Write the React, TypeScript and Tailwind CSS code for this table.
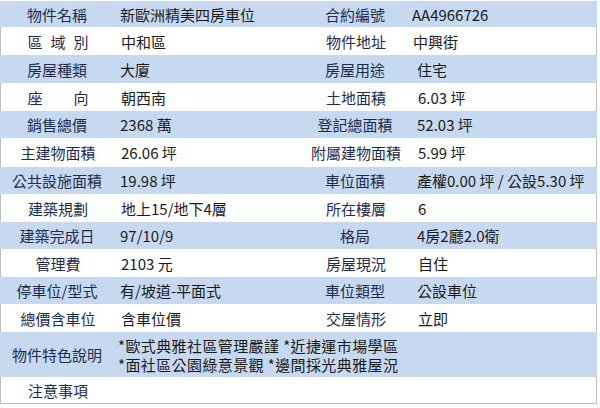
import React from 'react';

interface Row {
  label: string;
  value: string;
  label2?: string;
  value2?: string;
  h: string;
  spread?: boolean;
  tight?: boolean;
}

const rows: Row[] = [
  { label: '物件名稱', value: '新歐洲精美四房車位', label2: '合約編號', value2: 'AA4966726', h: 'h-[26px]', tight: true },
  { label: '區域別', value: '中和區', label2: '物件地址', value2: '中興街', h: 'h-[28px]', spread: true, tight: true },
  { label: '房屋種類', value: '大廈', label2: '房屋用途', value2: '住宅', h: 'h-[28px]' },
  { label: '座向', value: '朝西南', label2: '土地面積', value2: '6.03 坪', h: 'h-[28px]', spread: true },
  { label: '銷售總價', value: '2368 萬', label2: '登記總面積', value2: '52.03 坪', h: 'h-[27px]' },
  { label: '主建物面積', value: '26.06 坪', label2: '附屬建物面積', value2: '5.99 坪', h: 'h-[29px]' },
  { label: '公共設施面積', value: '19.98 坪', label2: '車位面積', value2: '產權0.00 坪 / 公設5.30 坪', h: 'h-[27px]' },
  { label: '建築規劃', value: '地上15/地下4層', label2: '所在樓層', value2: '6', h: 'h-[28px]' },
  { label: '建築完成日', value: '97/10/9', label2: '格局', value2: '4房2廳2.0衛', h: 'h-[27px]' },
  { label: '管理費', value: '2103 元', label2: '房屋現況', value2: '自住', h: 'h-[28px]' },
  { label: '停車位/型式', value: '有/坡道-平面式', label2: '車位類型', value2: '公設車位', h: 'h-[27px]' },
  { label: '總價含車位', value: '含車位價', label2: '交屋情形', value2: '立即', h: 'h-[28px]' },
];

const font = { fontFamily: '"Noto Sans CJK TC", "Noto Sans", sans-serif' };

const Label: React.FC<{ text: string; spread?: boolean; className: string }> = ({ text, spread, className }) => (
  <div className={`${className} shrink-0 flex items-center justify-center text-[#1d2c4c]`}>
    {spread ? (
      <span className="w-[61px] flex justify-between">
        {text.split('').map((c, i) => <span key={i}>{c}</span>)}
      </span>
    ) : (
      text
    )}
  </div>
);

export default function App() {
  return (
    <div className="w-[600px] h-[408px] bg-white pt-[1px] text-[15px] leading-none" style={font}>
      <div className="w-[597px]">
        {rows.map((r, i) => {
          const blue = i % 2 === 0;
          return (
            <div
              key={r.label}
              className={`flex items-center ${r.h} ${blue ? 'bg-[#c6d9f1]' : 'bg-white border-x border-[#bdbdbd]'}`}
            >
              <Label text={r.label} spread={r.spread} className="w-[114px]" />
              <div className="w-[191px] shrink-0 pl-[6px] text-[#1a1a1a] whitespace-nowrap">{r.value}</div>
              <Label text={r.label2 || ''} className="w-[100px]" />
              <div className={`flex-1 text-[#1a1a1a] whitespace-nowrap ${r.tight ? 'pl-[7px]' : 'pl-[12px]'}`}>{r.value2}</div>
            </div>
          );
        })}
        <div className="flex items-center h-[45px] bg-[#c6d9f1]">
          <Label text="物件特色說明" className="w-[114px]" />
          <div className="pl-[4px] text-[#1a1a1a] leading-[19px] tracking-[0.4px]">
            <div>*歐式典雅社區管理嚴謹 *近捷運市場學區</div>
            <div>*面社區公園綠意景觀 *邊間採光典雅屋況</div>
          </div>
        </div>
        <div className="flex items-center h-[27px] bg-white border-x border-b border-[#bdbdbd]">
          <Label text="注意事項" className="w-[114px]" />
        </div>
      </div>
    </div>
  );
}
